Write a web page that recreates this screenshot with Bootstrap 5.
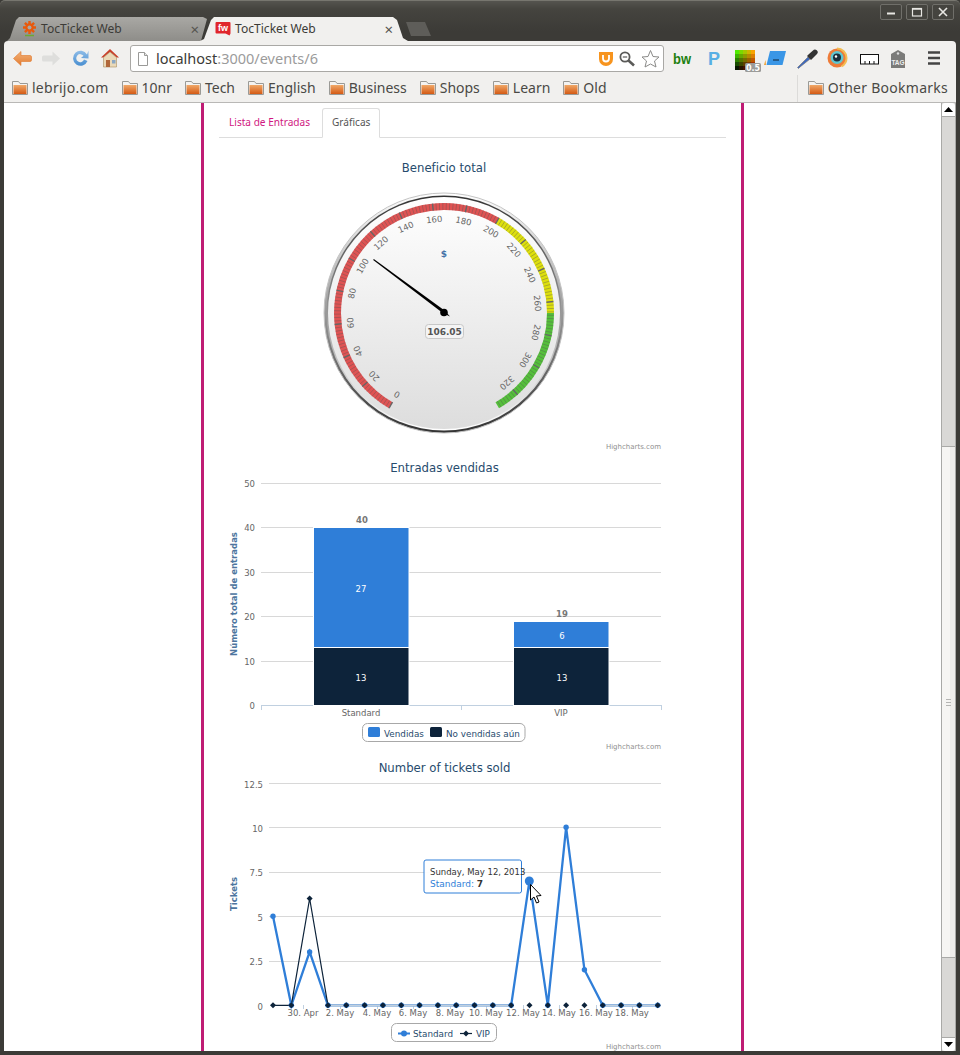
<!DOCTYPE html>
<html lang="es">
<head>
  <meta charset="UTF-8" />
  <meta name="viewport" content="width=device-width, initial-scale=1" />
  <title>TocTicket Web</title>
  <link href="https://cdn.jsdelivr.net/npm/bootstrap@5.3.3/dist/css/bootstrap.min.css" rel="stylesheet" />
  <style>
    html, body { height: 100%; overflow: hidden; }
    body { background: #3c3b37; font-family: "Noto Sans", "Open Sans", sans-serif; color: #3c3b37; }
    .app-window { width: 960px; height: 1055px; }

    /* title bar and tabs */
    .title-strip { height: 41px; background: linear-gradient(#55544f 0, #45443f 8px, #3c3b37 30px); border-top: 1px solid #77766f; border-radius: 5px 5px 0 0; padding-left: 7px; flex: none; }
    .browser-tab { height: 24px; margin-top: 16px; font-size: 12.1px; line-height: 24px; white-space: nowrap; }
    .tab-back { width: 200px; padding: 0 8px 0 15px; background: linear-gradient(#a9a8a4, #8e8d89); clip-path: polygon(0 100%, 3px 21px, 9px 3px, 12px 0, 196px 0, 200px 2px, 194px 100%); }
    .tab-front { width: 208px; margin-left: -7px; padding: 0 15px 0 15px; background: #f1f0ee; clip-path: polygon(0 100%, 4px 22px, 11px 3px, 14px 0, 193px 0, 197px 3px, 203px 21px, 208px 100%); }
    .tab-close { margin-left: auto; color: #55544f; font-size: 15px; line-height: 24px; }
    .tab-new { width: 25px; height: 14px; margin: 21px 0 0 -2px; background: #5e5d59; clip-path: polygon(0 0, 19px 0, 25px 100%, 5px 100%); }
    .win-btn { width: 22px; height: 16px; margin: 3px 0 0 4px; border: 1px solid #706f6a; border-radius: 2px; background: #45443f; display: flex; align-items: center; justify-content: center; }
    .win-btns { margin-right: 6px; }

    /* toolbar */
    .chrome-bars { margin: 0 4px; background: #f1f0ee; border-radius: 4px 4px 0 0; flex: none; }
    .tool-row { height: 32px; padding-top: 4px; }
    .nav-ico { flex: none; display: block; }
    .url-box { width: 534px; height: 27px; background: #fff; border: 1px solid #a9a8a5; border-radius: 3px; padding: 0 3px 0 7px; font-size: 14.5px; line-height: 25px; }
    .url-host { color: #3c3b37; }
    .url-rest { color: #9b9b9b; }

    /* bookmarks */
    .mark-row { height: 30px; padding-left: 8px; border-bottom: 1px solid #b9b8b6; font-size: 14px; line-height: 29px; color: #4a4945; }
    .mark-item { display: flex; align-items: center; gap: 4px; margin-right: 13px; white-space: nowrap; }
    .mark-wide { letter-spacing: .26px; }
    .mark-sep { width: 1px; height: 27px; margin: 1px 10px 0 auto; background: #dcdbd9; }
    .mark-end { margin-right: 8px; }

    /* page */
    .page-view { height: 948px; margin: 0 4px; background: #fff; overflow: hidden; }
    .page-scroll { width: 937px; overflow: hidden; }
    .event-col { width: 543px; height: 948px; margin-left: 197px; padding-left: 15px; border-left: 3px solid #bf1c74; border-right: 3px solid #bf1c74; }
    .event-tabs { width: 507px; height: 35px; padding-top: 5px; border-bottom-color: #ddd; font-size: 10.1px; }
    .event-tabs .nav-link { height: 30px; padding: 0 9px; line-height: 26px; color: #d0177f; border-radius: 3px 3px 0 0; }
    .event-tabs .nav-link.active { color: #555; border-color: #ddd #ddd #fff; }
    .event-tabs .nav-item { margin-right: 2px; }
    .chart-box { display: block; margin-left: 1px; width: 450px; height: 300px; flex: none; }
    .chart-first { margin-top: 15px; }

    /* highcharts look */
    .chart-box text { font-family: "DejaVu Sans", Verdana, sans-serif; }
    .hc-title { font-size: 11.7px; fill: #274b6d; text-anchor: middle; }
    .hc-credit { font-size: 7px; fill: #909090; text-anchor: end; }
    .hc-tick { font-size: 8.5px; fill: #666; }
    .hc-right { text-anchor: end; }
    .hc-mid { text-anchor: middle; }
    .hc-axis { font-size: 8.5px; font-weight: 700; fill: #4d759e; text-anchor: middle; }
    .hc-sum { font-size: 8.5px; font-weight: 700; fill: #777; text-anchor: middle; }
    .hc-in { font-size: 8.5px; fill: #fff; text-anchor: middle; }
    .hc-leg { font-size: 8.8px; fill: #274b6d; }
    .hc-grid { stroke: #d8d8d8; stroke-width: 1; }
    .hc-base { stroke: #c0d0e0; stroke-width: 1; fill: none; }
    .hc-zero { stroke: #c0d0e0; stroke-width: 2; fill: none; }
    .hc-box { fill: #fff; stroke: #a8a8a8; stroke-width: 1; }

    /* scrollbar */
    .scroll-rail { width: 15px; background: #d9d8d6; border-left: 1px solid #a9a9a7; border-right: 1px solid #a9a9a7; flex: none; }
    .scroll-btn { height: 14px; background: #fff; display: flex; align-items: center; justify-content: center; flex: none; }
    .scroll-top { border-bottom: 1px solid #a9a9a7; border-radius: 3px 3px 0 0; }
    .scroll-bot { border-top: 1px solid #a9a9a7; border-radius: 0 0 3px 3px; }
    .scroll-gap1 { height: 329px; flex: none; }
    .scroll-thumb { height: 512px; background: linear-gradient(90deg, #f6f5f3 60%, #eeedeb 60%); border-top: 1px solid #a9a9a7; border-bottom: 1px solid #a9a9a7; flex: none; }
    .scroll-grip { width: 5px; height: 7px; border-top: 1px solid #b5b5b3; border-bottom: 1px solid #b5b5b3; background: linear-gradient(#b5b5b3, #b5b5b3) center / 100% 1px no-repeat; }
  </style>
</head>
<body>
<div class="app-window d-flex flex-column">

  <div class="title-strip d-flex">
    <div class="browser-tab tab-back d-flex align-items-center gap-1">
      <svg class="nav-ico" width="15" height="16" viewBox="0 0 15 16"><g stroke="#e8590c" stroke-width="2.4"><path d="M7.5 0v13M1 6.500h13M2.900 1.900l9.200 9.200M12.100 1.900l-9.200 9.200"/></g><circle cx="7.500" cy="6.500" r="4.200" fill="#e8590c"/><circle cx="7.500" cy="6.500" r="2" fill="#a9a8a4"/><path d="M3 14.500h9" stroke="#6da832" stroke-width="1.500"/></svg>
      <span>TocTicket Web</span>
      <span class="tab-close">×</span>
    </div>
    <div class="browser-tab tab-front d-flex align-items-center gap-1">
      <svg class="nav-ico" width="16" height="16" viewBox="0 0 16 16"><path d="M1.500 1h13a1 1 0 0 1 1 1v10.500l-1 2-4-2h-9a1 1 0 0 1-1-1V2a1 1 0 0 1 1-1z" fill="#e0262c"/><text x="8" y="10" text-anchor="middle" font-family="Liberation Sans, sans-serif" font-size="9" font-weight="700" fill="#fff">fw</text></svg>
      <span>TocTicket Web</span>
      <span class="tab-close">×</span>
    </div>
    <div class="tab-new"></div>
    <div class="win-btns ms-auto d-flex">
      <div class="win-btn"><svg width="12" height="10" viewBox="0 0 12 10"><path d="M2 6.500h8" stroke="#e8e7e3" stroke-width="2"/></svg></div>
      <div class="win-btn"><svg width="12" height="10" viewBox="0 0 12 10"><rect x="1.500" y="1.500" width="9" height="7.500" fill="none" stroke="#e8e7e3" stroke-width="1.200"/><path d="M1.500 2h9" stroke="#e8e7e3" stroke-width="1.500"/></svg></div>
      <div class="win-btn"><svg width="12" height="10" viewBox="0 0 12 10"><path d="M2 1l8 8M10 1l-8 8" stroke="#e8e7e3" stroke-width="1.600"/></svg></div>
    </div>
  </div>

  <div class="chrome-bars">
    <div class="tool-row d-flex">
      <svg class="nav-ico" width="126" height="27" viewBox="0 0 126 27">
        <defs>
          <linearGradient id="orangeArrow" x1="0" y1="0" x2="0" y2="1"><stop offset="0" stop-color="#f2b27a"/><stop offset="1" stop-color="#e37c30"/></linearGradient>
          <linearGradient id="blueReload" x1="0" y1="0" x2="0" y2="1"><stop offset="0" stop-color="#8fbde8"/><stop offset="1" stop-color="#4a8fd0"/></linearGradient>
        </defs>
        <path d="M9.500 13.500 L17 6.500 V10.500 H26 A1.500 1.500 0 0 1 27.500 12 V15 A1.500 1.500 0 0 1 26 16.500 H17 V20.500 Z" fill="url(#orangeArrow)" stroke="#e0772a" stroke-width=".6" stroke-linejoin="round"/>
        <path d="M56 13.500 L48.500 6.500 V10.500 H39.500 A1.500 1.500 0 0 0 38 12 V15 A1.500 1.500 0 0 0 39.500 16.500 H48.500 V20.500 Z" fill="#dededc"/>
        <path d="M83 9.500 A7.500 7.500 0 1 0 83.500 16 L80 14.500 A4 4 0 1 1 79.500 10.800 L77 13 L84.500 13.500 L84.500 5.500 Z" fill="url(#blueReload)"/>
        <path d="M97 12.500 L106 4 L115 12.500 L112.500 12.500 L106 7 L99.500 12.500 Z" fill="#c9402a"/>
        <path d="M99.500 12.500 L106 7 L112.500 12.500 V22 H99.500 Z" fill="#ead9b8" stroke="#a98d60" stroke-width=".6"/>
        <rect x="102" y="15" width="4" height="7" fill="#b0673a"/><rect x="108" y="15" width="3.500" height="3.500" fill="#8aa7c4"/>
      </svg>
      <div class="url-box d-flex align-items-center">
        <svg class="nav-ico me-2" width="10" height="14" viewBox="0 0 10 14"><path d="M.5.500h6l3 3v10h-9z" fill="#fff" stroke="#9a9a98"/><path d="M6.500.500v3h3" fill="#e6e6e6" stroke="#9a9a98"/></svg>
        <span><span class="url-host">localhost</span><span class="url-rest">:3000/events/6</span></span>
        <svg class="nav-ico ms-auto" width="63" height="20" viewBox="0 0 63 20">
          <path d="M2 3h14v7a7 7 0 0 1-14 0z" fill="#f7941e"/><path d="M6 6v3.500a3 3 0 0 0 6 0V6" fill="none" stroke="#fff" stroke-width="1.800"/>
          <circle cx="28" cy="8" r="4.600" fill="none" stroke="#5a5a58" stroke-width="1.800"/><path d="M31.500 11.500 L37 16.500" stroke="#5a5a58" stroke-width="2.600"/><path d="M25.800 8h4.400" stroke="#5a5a58" stroke-width="1.200"/>
          <path d="M53.500 1.500 L56 7.500 L62 8 L57.500 12 L59 18 L53.500 15 L48 18 L49.500 12 L45 8 L51 7.500 Z" fill="#fff" stroke="#8a8a88" stroke-width="1"/>
        </svg>
      </div>
      <svg class="nav-ico" width="278" height="27" viewBox="0 0 278 27" id="extIcons">
        <text x="9" y="19" font-family="Liberation Sans, sans-serif" font-size="15" font-weight="700" fill="#22800f" textLength="18" lengthAdjust="spacingAndGlyphs">bw</text>
        <text x="44" y="20" font-family="Liberation Sans, sans-serif" font-size="18" font-weight="700" fill="#58afe4">P</text>
        <g id="colorGrid"></g>
        <rect x="81" y="18" width="16" height="9" rx="1.500" fill="#9b9b99"/>
        <text x="89" y="25.500" text-anchor="middle" font-family="DejaVu Sans, sans-serif" font-size="8" font-weight="700" fill="#fff">0.5</text>
        <path d="M106 6h16l-3.500 14h-16z" fill="#3a96e6"/><path d="M102 20h-2l1.500-5z" fill="#f0a030"/><path d="M109 15h6" stroke="#123" stroke-width="1"/>
        <path d="M136 22 L134.500 23.500 L133.500 22.500 L135 21 L144 12 L146 14 Z" fill="#3c68c0" stroke="#777" stroke-width=".7"/><path d="M143 11 L147 15 L149 13 L153 9 A2.500 2.500 0 0 0 149 5.500 L145 9 Z" fill="#333"/>
        <circle cx="173" cy="13" r="9.500" fill="#ee7b38"/><path d="M173 3.500a9.500 9.500 0 0 1 9.500 9.500 9.500 9.500 0 0 1-5 8.400" fill="none" stroke="#f3bd52" stroke-width="2"/><circle cx="173" cy="12.500" r="6.500" fill="#5fc6d2"/><circle cx="173" cy="12.500" r="4" fill="#1d2e3a"/><circle cx="172" cy="11.500" r="1.200" fill="#fff"/>
        <rect x="196.500" y="9.500" width="18" height="9.500" fill="#fff" stroke="#111"/><path d="M201 19v-3M205.500 19v-3M210 19v-3" stroke="#111"/>
        <path d="M227 9l7-4 7 4v14h-14z" fill="#7b7b79"/><circle cx="234" cy="8.500" r="1.200" fill="#ddd"/><text x="234" y="20" text-anchor="middle" font-family="Liberation Sans, sans-serif" font-size="6.500" font-weight="700" fill="#eee">TAG</text>
        <path d="M264 8.500h12M264 14h12M264 19.500h12" stroke="#444" stroke-width="2.600" transform="translate(0 -1)"/>
      </svg>
    </div>
    <div class="mark-row d-flex align-items-center">
      <div class="mark-item"><svg class="nav-ico" width="16" height="15"><use href="#folderIco"/></svg><span class="mark-wide">lebrijo.com</span></div>
      <div class="mark-item"><svg class="nav-ico" width="16" height="15"><use href="#folderIco"/></svg><span>10nr</span></div>
      <div class="mark-item"><svg class="nav-ico" width="16" height="15"><use href="#folderIco"/></svg><span>Tech</span></div>
      <div class="mark-item"><svg class="nav-ico" width="16" height="15"><use href="#folderIco"/></svg><span>English</span></div>
      <div class="mark-item"><svg class="nav-ico" width="16" height="15"><use href="#folderIco"/></svg><span>Business</span></div>
      <div class="mark-item"><svg class="nav-ico" width="16" height="15"><use href="#folderIco"/></svg><span>Shops</span></div>
      <div class="mark-item"><svg class="nav-ico" width="16" height="15"><use href="#folderIco"/></svg><span>Learn</span></div>
      <div class="mark-item"><svg class="nav-ico" width="16" height="15"><use href="#folderIco"/></svg><span>Old</span></div>
      <div class="mark-sep"></div>
      <div class="mark-item mark-end"><svg class="nav-ico" width="16" height="15"><use href="#folderIco"/></svg><span class="mark-wide">Other Bookmarks</span></div>
    </div>
  </div>

  <div class="page-view d-flex">
    <div class="page-scroll">
      <div class="event-col d-flex flex-column">
        <ul class="nav nav-tabs event-tabs">
          <li class="nav-item"><a class="nav-link" href="#">Lista de Entradas</a></li>
          <li class="nav-item"><a class="nav-link active" href="#">Gráficas</a></li>
        </ul>

        <!-- gauge -->
        <svg class="chart-box chart-first" viewBox="220 153 450 300">
          <defs>
            <linearGradient id="rimOuter" x1="0" y1="0" x2="0" y2="1"><stop offset="0" stop-color="#fff"/><stop offset="1" stop-color="#333"/></linearGradient>
            <linearGradient id="rimInner" x1="0" y1="0" x2="0" y2="1"><stop offset="0" stop-color="#333"/><stop offset="1" stop-color="#fff"/></linearGradient>
            <linearGradient id="faceFill" x1="0" y1="0" x2="0" y2="1"><stop offset="0" stop-color="#fff"/><stop offset="1" stop-color="#ddd"/></linearGradient>
          </defs>
          <text class="hc-title" x="444" y="172">Beneficio total</text>
          <circle cx="444" cy="313" r="120" fill="url(#rimOuter)" stroke="#c4c4c4"/>
          <circle cx="444" cy="313" r="117.500" fill="url(#rimInner)"/>
          <circle cx="444" cy="313" r="116" fill="url(#faceFill)"/>
          <g id="gaugeBand"></g>
          <g id="gaugeLabels"></g>
          <text x="444" y="257" text-anchor="middle" font-size="9" font-weight="700" fill="#4572a7">$</text>
          <path d="M373.800 259.100 L444.900 310.800 L450 316.500 L443.100 313.200 L373.200 259.900 Z" fill="#000"/>
          <circle cx="444" cy="312.500" r="3.800" fill="#000"/>
          <rect x="425.500" y="324.500" width="38" height="14" rx="3" fill="#f4f4f4" stroke="#c8c8c8"/>
          <text x="444.500" y="335" text-anchor="middle" font-size="9" font-weight="700" fill="#555">106.05</text>
          <text class="hc-credit" x="661" y="449">Highcharts.com</text>
        </svg>

        <!-- barras -->
        <svg class="chart-box" viewBox="220 453 450 300">
          <text class="hc-title" x="444.500" y="472">Entradas vendidas</text>
          <path class="hc-grid" d="M261 483.500H661M261 527.500H661M261 572.500H661M261 616.500H661M261 661.500H661"/>
          <path class="hc-base" d="M261 705.500H661M261.500 705v5M461.500 705v5M661.500 705v5"/>
          <g class="hc-tick hc-right">
            <text x="255" y="487">50</text><text x="255" y="531">40</text><text x="255" y="576">30</text><text x="255" y="620">20</text><text x="255" y="665">10</text><text x="255" y="709">0</text>
          </g>
          <text class="hc-axis" transform="translate(237 594) rotate(-90)">Número total de entradas</text>
          <g stroke="#fff" stroke-width="1">
            <rect x="313.500" y="527.500" width="95.500" height="120" fill="#2f7ed8"/>
            <rect x="313.500" y="647.500" width="95.500" height="58" fill="#0d233a"/>
            <rect x="513.500" y="621.500" width="95.500" height="26" fill="#2f7ed8"/>
            <rect x="513.500" y="647.500" width="95.500" height="58" fill="#0d233a"/>
          </g>
          <text class="hc-sum" x="362" y="523">40</text><text class="hc-sum" x="562" y="617">19</text>
          <text class="hc-in" x="361" y="592">27</text><text class="hc-in" x="361" y="681">13</text>
          <text class="hc-in" x="562" y="639">6</text><text class="hc-in" x="562" y="681">13</text>
          <text class="hc-tick hc-mid" x="361" y="716">Standard</text><text class="hc-tick hc-mid" x="561" y="716">VIP</text>
          <rect class="hc-box" x="362.500" y="723.500" width="162.500" height="18" rx="5"/>
          <rect x="368" y="727" width="12" height="10" rx="1.500" fill="#2f7ed8"/>
          <text class="hc-leg" x="384" y="737">Vendidas</text>
          <rect x="430" y="727" width="12" height="10" rx="1.500" fill="#0d233a"/>
          <text class="hc-leg" x="446" y="737">No vendidas aún</text>
          <text class="hc-credit" x="661" y="749">Highcharts.com</text>
        </svg>

        <!-- lineas -->
        <svg class="chart-box" viewBox="220 753 450 300">
          <text class="hc-title" x="444.500" y="772">Number of tickets sold</text>
          <path class="hc-grid" d="M269 783.500H661M269 827.500H661M269 872.500H661M269 916.500H661M269 961.500H661"/>
          <path class="hc-base" d="M303.500 1005v4M340.500 1005v4M377.500 1005v4M413.500 1005v4M450.500 1005v4M486.500 1005v4M523.500 1005v4M559.500 1005v4M596.500 1005v4M632.500 1005v4"/>
          <g class="hc-tick hc-right">
            <text x="263" y="788">12.5</text><text x="263" y="832">10</text><text x="263" y="876">7.5</text><text x="263" y="921">5</text><text x="263" y="965">2.5</text><text x="263" y="1010">0</text>
          </g>
          <text class="hc-axis" transform="translate(237 894) rotate(-90)">Tickets</text>
          <g class="hc-tick hc-mid">
            <text x="303" y="1016">30. Apr</text><text x="340" y="1016">2. May</text><text x="377" y="1016">4. May</text><text x="413" y="1016">6. May</text><text x="450" y="1016">8. May</text><text x="486" y="1016">10. May</text><text x="523" y="1016">12. May</text><text x="559" y="1016">14. May</text><text x="596" y="1016">16. May</text><text x="632" y="1016">18. May</text>
          </g>
          <g id="lineSeries"></g>
          <rect class="hc-box" x="391.500" y="1023.500" width="105" height="18" rx="5"/>
          <path d="M398 1033.500h12" stroke="#2f7ed8" stroke-width="2"/><circle cx="404" cy="1033.500" r="3" fill="#2f7ed8"/>
          <text class="hc-leg" x="413" y="1037">Standard</text>
          <path d="M460 1033.500h12" stroke="#0d233a" stroke-width="1.200"/><path d="M466 1030.500l3 3-3 3-3-3z" fill="#0d233a"/>
          <text class="hc-leg" x="476" y="1037">VIP</text>
          <rect x="424" y="860" width="97.500" height="33" rx="2" fill="#fff" fill-opacity=".95" stroke="#2f7ed8" stroke-width="1"/>
          <text x="430" y="875" font-size="8.500" fill="#333">Sunday, May 12, 2013</text>
          <text x="430" y="887" font-size="9" fill="#2f7ed8">Standard: <tspan font-weight="700" fill="#333">7</tspan></text>
          <circle cx="529.300" cy="881" r="4.500" fill="#2f7ed8"/>
          <path d="M530.500 884.500 V900 L534 897 L536.500 903 L539 902 L536.500 896 L541 895.500 Z" fill="#fff" stroke="#000"/>
          <text class="hc-credit" x="661" y="1049">Highcharts.com</text>
        </svg>
      </div>
    </div>
    <div class="scroll-rail d-flex flex-column">
      <div class="scroll-btn scroll-top"><svg width="9" height="5" viewBox="0 0 9 5"><path d="M4.500 0L9 5H0z" fill="#000"/></svg></div>
      <div class="scroll-gap1"></div>
      <div class="scroll-thumb d-flex align-items-center justify-content-center"><div class="scroll-grip"></div></div>
      <div class="flex-grow-1"></div>
      <div class="scroll-btn scroll-bot"><svg width="9" height="5" viewBox="0 0 9 5"><path d="M4.500 5L9 0H0z" fill="#000"/></svg></div>
    </div>
  </div>
</div>

<svg width="0" height="0" class="d-block">
  <defs>
    <linearGradient id="folderFill" x1="0" y1="0" x2="0" y2="1"><stop offset="0" stop-color="#f0a868"/><stop offset="1" stop-color="#d45a14"/></linearGradient>
    <symbol id="folderIco" viewBox="0 0 16 15">
      <path d="M.500 1.500h6l1.500 2h7.500v11H.500z" fill="#f4f3f1" stroke="#9a9a96"/>
      <rect x="1.500" y="5" width="13" height="9" fill="url(#folderFill)"/>
    </symbol>
  </defs>
</svg>

<script src="https://cdn.jsdelivr.net/npm/bootstrap@5.3.3/dist/js/bootstrap.bundle.min.js"></script>
<script>
  (() => {
    'use strict';
    const NS = 'http://www.w3.org/2000/svg';
    const add = (parent, tag, attrs, txt) => {
      const el = document.createElementNS(NS, tag);
      Object.keys(attrs).forEach(k => el.setAttribute(k, attrs[k]));
      if (txt !== undefined) el.textContent = txt;
      parent.appendChild(el);
      return el;
    };

    // gauge band and ticks
    const cx = 444, cy = 313;
    const polar = (deg, r) => {
      const a = (deg - 90) * Math.PI / 180;
      return [cx + r * Math.cos(a), cy + r * Math.sin(a)];
    };
    const band = document.getElementById('gaugeBand');
    [[-150, 30, '#df5353'], [30, 90, '#dddf0d'], [90, 150, '#55bf3b']].forEach(([a, b, color]) => {
      const p0 = polar(a, 106.5), p1 = polar(b, 106.5);
      add(band, 'path', {
        d: `M${p0[0]} ${p0[1]}A106.500 106.500 0 ${b - a > 180 ? 1 : 0} 1 ${p1[0]} ${p1[1]}`,
        fill: 'none', stroke: color, 'stroke-width': 7
      });
    });
    for (let i = 0; i <= 166; i++) {
      const deg = -150 + i * 1.8;
      const major = i % 10 === 0;
      const p0 = polar(deg, 103), p1 = polar(deg, 110);
      add(band, 'line', {
        x1: p0[0], y1: p0[1], x2: p1[0], y2: p1[1],
        stroke: major ? '#666' : '#555', 'stroke-width': major ? 1.4 : .7, 'stroke-opacity': major ? 1 : .55
      });
    }
    const labels = document.getElementById('gaugeLabels');
    for (let v = 0; v <= 320; v += 20) {
      const deg = -150 + v * .9;
      const p = polar(deg, 94);
      add(labels, 'text', {
        x: 0, y: 3, 'text-anchor': 'middle', 'font-size': 8.5, fill: '#666',
        transform: `translate(${p[0]} ${p[1]}) rotate(${deg})`
      }, v);
    }

    // line chart
    const xAt = i => 273 + i * 18.32;
    const yAt = v => 1005.3 - v * 17.8;
    const std = [5, 0, 3, 0, 0, 0, 0, 0, 0, 0, 0, 0, 0, 0, 7, 0, 10, 2, 0, 0, 0, 0];
    const vip = [0, 0, 6, 0, 0, 0, 0, 0, 0, 0, 0, 0, 0, 0, 0, 0, 0, 0, 0, 0, 0, 0];
    const pts = arr => arr.map((v, i) => `${xAt(i)},${yAt(v)}`).join(' ');
    const series = document.getElementById('lineSeries');
    add(series, 'polyline', { points: pts(std), fill: 'none', stroke: '#2f7ed8', 'stroke-width': 2.300 });
    add(series, 'polyline', { points: pts(vip.slice(0, 4)), fill: 'none', stroke: '#0d233a', 'stroke-width': 1.200 });
    add(series, 'path', { class: 'hc-zero', d: 'M328 1005.500H511M603 1005.500H661' });
    std.forEach((v, i) => add(series, 'circle', { cx: xAt(i), cy: yAt(v), r: 2.700, fill: '#2f7ed8' }));
    vip.forEach((v, i) => {
      const x = xAt(i), y = yAt(v);
      add(series, 'path', { d: `M${x} ${y - 3}l3 3-3 3-3-3z`, fill: '#0d233a' });
    });

    // colour picker swatch in the toolbar
    const grid = document.getElementById('colorGrid');
    for (let r = 0; r < 5; r++) {
      for (let c = 0; c < 5; c++) {
        const k = 1 - r / 4.4;
        const red = Math.round((80 + c * 42) * k + (r * c * 7));
        const green = Math.round((235 - c * 18) * k);
        add(grid, 'rect', { x: 71 + c * 4, y: 5 + r * 4, width: 4, height: 4, fill: `rgb(${red},${green},0)` });
      }
    }
  })();
</script>
</body>
</html>
